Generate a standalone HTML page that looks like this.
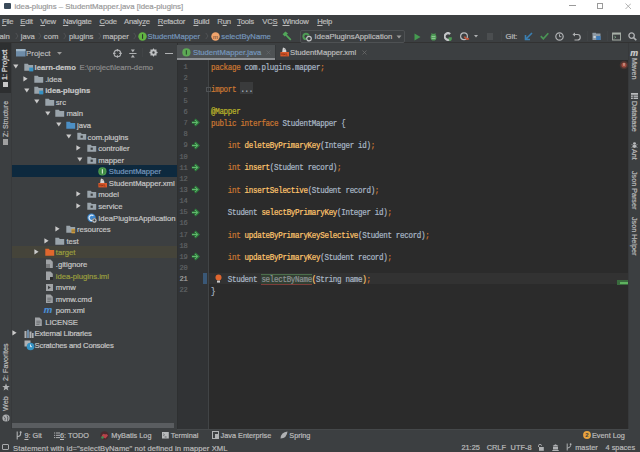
<!DOCTYPE html><html><head><meta charset="utf-8"><style>html,body{margin:0;padding:0}body{width:640px;height:452px;overflow:hidden;position:relative;background:#3C3F41}div,svg{position:absolute}div{-webkit-text-stroke-width:0.2px}</style></head><body>
<div style="position:absolute;left:0px;top:0px;width:640px;height:15px;background:#FFFFFF;"></div>
<div style="position:absolute;left:14.5px;top:1.92px;font:normal 7.8px/9.36px 'Liberation Sans', sans-serif;color:#9A9A9A;white-space:pre;letter-spacing:0px;">idea-plugins – StudentMapper.java [idea-plugins]</div>
<div style="position:absolute;left:4px;top:3px;width:7px;height:6px;background:#3A4A5A;border-radius:1px"></div>
<div style="position:absolute;left:569px;top:5.2px;width:7px;height:0.8px;background:#9A9A9A;"></div>
<div style="position:absolute;left:597px;top:3px;width:6px;height:6px;background:transparent;border:0.8px solid #9A9A9A;box-sizing:border-box"></div>
<svg style="left:624.5px;top:3px" width="6.5" height="6.5"><path d="M0.5 0.5L6 6M6 0.5L0.5 6" stroke="#9A9A9A" stroke-width="0.75"/></svg>
<div style="position:absolute;left:0px;top:15px;width:640px;height:14px;background:#3C3F41;"></div>
<div style="position:absolute;left:1.9px;top:17.01px;font:normal 7.7px/9.24px 'Liberation Sans', sans-serif;color:#BBBBBB;white-space:pre;letter-spacing:-0.22px;"><u style="text-decoration-thickness:0.7px;text-underline-offset:1px">F</u>ile</div>
<div style="position:absolute;left:20.3px;top:17.01px;font:normal 7.7px/9.24px 'Liberation Sans', sans-serif;color:#BBBBBB;white-space:pre;letter-spacing:-0.22px;"><u style="text-decoration-thickness:0.7px;text-underline-offset:1px">E</u>dit</div>
<div style="position:absolute;left:40.3px;top:17.01px;font:normal 7.7px/9.24px 'Liberation Sans', sans-serif;color:#BBBBBB;white-space:pre;letter-spacing:-0.22px;"><u style="text-decoration-thickness:0.7px;text-underline-offset:1px">V</u>iew</div>
<div style="position:absolute;left:62.9px;top:17.01px;font:normal 7.7px/9.24px 'Liberation Sans', sans-serif;color:#BBBBBB;white-space:pre;letter-spacing:-0.22px;"><u style="text-decoration-thickness:0.7px;text-underline-offset:1px">N</u>avigate</div>
<div style="position:absolute;left:99.4px;top:17.01px;font:normal 7.7px/9.24px 'Liberation Sans', sans-serif;color:#BBBBBB;white-space:pre;letter-spacing:-0.22px;"><u style="text-decoration-thickness:0.7px;text-underline-offset:1px">C</u>ode</div>
<div style="position:absolute;left:124px;top:17.01px;font:normal 7.7px/9.24px 'Liberation Sans', sans-serif;color:#BBBBBB;white-space:pre;letter-spacing:-0.22px;">Analy<u style="text-decoration-thickness:0.7px;text-underline-offset:1px">z</u>e</div>
<div style="position:absolute;left:157.8px;top:17.01px;font:normal 7.7px/9.24px 'Liberation Sans', sans-serif;color:#BBBBBB;white-space:pre;letter-spacing:-0.22px;"><u style="text-decoration-thickness:0.7px;text-underline-offset:1px">R</u>efactor</div>
<div style="position:absolute;left:193.4px;top:17.01px;font:normal 7.7px/9.24px 'Liberation Sans', sans-serif;color:#BBBBBB;white-space:pre;letter-spacing:-0.22px;"><u style="text-decoration-thickness:0.7px;text-underline-offset:1px">B</u>uild</div>
<div style="position:absolute;left:217.3px;top:17.01px;font:normal 7.7px/9.24px 'Liberation Sans', sans-serif;color:#BBBBBB;white-space:pre;letter-spacing:-0.22px;">R<u style="text-decoration-thickness:0.7px;text-underline-offset:1px">u</u>n</div>
<div style="position:absolute;left:237.1px;top:17.01px;font:normal 7.7px/9.24px 'Liberation Sans', sans-serif;color:#BBBBBB;white-space:pre;letter-spacing:-0.22px;"><u style="text-decoration-thickness:0.7px;text-underline-offset:1px">T</u>ools</div>
<div style="position:absolute;left:262.3px;top:17.01px;font:normal 7.7px/9.24px 'Liberation Sans', sans-serif;color:#BBBBBB;white-space:pre;letter-spacing:-0.22px;">VC<u style="text-decoration-thickness:0.7px;text-underline-offset:1px">S</u></div>
<div style="position:absolute;left:282.5px;top:17.01px;font:normal 7.7px/9.24px 'Liberation Sans', sans-serif;color:#BBBBBB;white-space:pre;letter-spacing:-0.22px;"><u style="text-decoration-thickness:0.7px;text-underline-offset:1px">W</u>indow</div>
<div style="position:absolute;left:317.2px;top:17.01px;font:normal 7.7px/9.24px 'Liberation Sans', sans-serif;color:#BBBBBB;white-space:pre;letter-spacing:-0.22px;"><u style="text-decoration-thickness:0.7px;text-underline-offset:1px">H</u>elp</div>
<div style="position:absolute;left:0px;top:29px;width:640px;height:14px;background:#3C3F41;"></div>
<div style="position:absolute;left:0px;top:42px;width:640px;height:1px;background:#323232;"></div>
<div style="position:absolute;left:-0.5px;top:31.91px;font:normal 7.7px/9.24px 'Liberation Sans', sans-serif;color:#BBBBBB;white-space:pre;letter-spacing:0px;">ain</div>
<div style="position:absolute;left:20.8px;top:31.91px;font:normal 7.7px/9.24px 'Liberation Sans', sans-serif;color:#BBBBBB;white-space:pre;letter-spacing:0px;">java</div>
<div style="position:absolute;left:43.8px;top:31.91px;font:normal 7.7px/9.24px 'Liberation Sans', sans-serif;color:#BBBBBB;white-space:pre;letter-spacing:0px;">com</div>
<div style="position:absolute;left:68.9px;top:31.91px;font:normal 7.7px/9.24px 'Liberation Sans', sans-serif;color:#BBBBBB;white-space:pre;letter-spacing:0px;">plugins</div>
<div style="position:absolute;left:102.8px;top:31.91px;font:normal 7.7px/9.24px 'Liberation Sans', sans-serif;color:#BBBBBB;white-space:pre;letter-spacing:0px;">mapper</div>
<svg style="left:15.399999999999999px;top:32px" width="4" height="8"><path d="M0.8 1L3 4L0.8 7" stroke="#5A5C5E" stroke-width="0.7" fill="none"/></svg>
<svg style="left:38.4px;top:32px" width="4" height="8"><path d="M0.8 1L3 4L0.8 7" stroke="#5A5C5E" stroke-width="0.7" fill="none"/></svg>
<svg style="left:62.5px;top:32px" width="4" height="8"><path d="M0.8 1L3 4L0.8 7" stroke="#5A5C5E" stroke-width="0.7" fill="none"/></svg>
<svg style="left:97.5px;top:32px" width="4" height="8"><path d="M0.8 1L3 4L0.8 7" stroke="#5A5C5E" stroke-width="0.7" fill="none"/></svg>
<svg style="left:132.5px;top:32px" width="4" height="8"><path d="M0.8 1L3 4L0.8 7" stroke="#5A5C5E" stroke-width="0.7" fill="none"/></svg>
<svg style="left:205px;top:32px" width="4" height="8"><path d="M0.8 1L3 4L0.8 7" stroke="#5A5C5E" stroke-width="0.7" fill="none"/></svg>
<svg style="left:137.5px;top:31.5px" width="9" height="9"><circle cx="4.5" cy="4.5" r="4.2" fill="#62B543"/><rect x="4" y="2.2" width="1.1" height="4.6" fill="#2B3A2B"/></svg>
<div style="position:absolute;left:147.5px;top:31.91px;font:normal 7.7px/9.24px 'Liberation Sans', sans-serif;color:#7596BC;white-space:pre;letter-spacing:0px;">StudentMapper</div>
<svg style="left:211px;top:31.5px" width="9" height="9"><circle cx="4.5" cy="4.5" r="4.2" fill="#F0A46C"/><text x="4.5" y="6.6" font-size="6" text-anchor="middle" fill="#5A3A2A" font-family="Liberation Sans">m</text></svg>
<div style="position:absolute;left:221.3px;top:31.91px;font:normal 7.7px/9.24px 'Liberation Sans', sans-serif;color:#7596BC;white-space:pre;letter-spacing:0px;">selectByName</div>
<svg style="left:282px;top:31px" width="10" height="10"><path d="M3.6 3.6L8.8 8.8" stroke="#52A85A" stroke-width="1.7"/><path d="M0.6 3.2L3.4 0.4L6 2.6L2.8 5.6Z" fill="#52A85A"/></svg>
<div style="position:absolute;left:300px;top:29.5px;width:105px;height:13.5px;background:#3C3F41;border:1px solid #4E5153;box-sizing:border-box;border-radius:2px"></div>
<svg style="left:302px;top:31.5px" width="11" height="10"><circle cx="4" cy="4.4" r="3.6" fill="#4E9A55"/><circle cx="4" cy="4.4" r="1.6" fill="#3C3F41"/><circle cx="7" cy="6.6" r="3" fill="#3C3F41"/><circle cx="7" cy="6.6" r="2.3" fill="none" stroke="#C4C6C8" stroke-width="1.2"/></svg>
<div style="position:absolute;left:314.5px;top:32.11px;font:normal 7.7px/9.24px 'Liberation Sans', sans-serif;color:#BBBBBB;white-space:pre;letter-spacing:0px;">IdeaPluginsApplication</div>
<svg style="left:396px;top:34.5px" width="6" height="4"><path d="M0.5 0.5L5.5 0.5L3 3.5Z" fill="#9A9A9A"/></svg>
<svg style="left:414px;top:32.5px" width="7" height="8"><path d="M0.5 0.5L6.5 4L0.5 7.5Z" fill="#459A50"/></svg>
<svg style="left:429.8px;top:32px" width="7" height="9"><path d="M1.6 1.2L2.6 2.3M5.4 1.2L4.4 2.3" stroke="#4E9A55" stroke-width="0.9"/><ellipse cx="3.5" cy="5.2" rx="2.9" ry="3.4" fill="#4E9A55"/><path d="M1.6 4.6H5.4M1.6 6.4H5.4" stroke="#A6D4AA" stroke-width="0.8"/></svg>
<svg style="left:444px;top:32px" width="8" height="9"><path d="M6.2 2A3.3 3.3 0 1 0 6.2 7" fill="none" stroke="#C4C6C8" stroke-width="2.1"/><path d="M4.6 5.2H7.8V7Q7.8 8.6 6.2 9Q4.6 8.6 4.6 7Z" fill="#4E9A55"/></svg>
<svg style="left:460px;top:32px" width="10" height="9"><circle cx="4" cy="4.2" r="3.4" fill="none" stroke="#B8BABC" stroke-width="1.2"/><path d="M4.5 4.5Q6 8 9 6.5" stroke="#C2553A" stroke-width="1.9" fill="none"/></svg>
<svg style="left:474px;top:35px" width="4" height="3"><path d="M0 0L4 0L2 2.5Z" fill="#AFB1B3"/></svg>
<div style="position:absolute;left:486.5px;top:33px;width:6.5px;height:6.5px;background:#4B4E50;"></div>
<div style="position:absolute;left:501px;top:31px;width:1px;height:10px;background:#414446;"></div>
<div style="position:absolute;left:505.5px;top:31.91px;font:normal 7.7px/9.24px 'Liberation Sans', sans-serif;color:#BBBBBB;white-space:pre;letter-spacing:0px;">Git:</div>
<svg style="left:524px;top:32px" width="9" height="9"><path d="M8 1L2 7M1.5 3V7.5H6" stroke="#3A7FB2" stroke-width="1.6" fill="none"/></svg>
<svg style="left:540px;top:32px" width="9" height="8"><path d="M0.8 4.2L3.3 6.8L8.3 1.2" stroke="#4A9455" stroke-width="1.7" fill="none"/></svg>
<svg style="left:554.5px;top:31.5px" width="9" height="9"><circle cx="4.5" cy="4.5" r="3.7" fill="none" stroke="#AFB1B3" stroke-width="1.2"/><path d="M4.5 2.3V4.7H6.3" stroke="#AFB1B3" stroke-width="1" fill="none"/></svg>
<svg style="left:572px;top:32px" width="9" height="9"><path d="M2 2.5H5.5A2.7 2.7 0 0 1 5.5 8H2.5" stroke="#AFB1B3" stroke-width="1.2" fill="none"/><path d="M0.5 2.5L3 0.5V4.5Z" fill="#AFB1B3"/></svg>
<div style="position:absolute;left:586.5px;top:31px;width:1px;height:10px;background:#414446;"></div>
<svg style="left:592px;top:32px" width="9" height="9"><rect x="0.5" y="1.5" width="8" height="6.5" fill="#8E9AA4"/><rect x="0.5" y="0.8" width="3.5" height="1.5" fill="#8E9AA4"/><rect x="4.2" y="4" width="4.3" height="4" fill="#3C7AB8"/><rect x="1.5" y="4" width="2.2" height="2" fill="#C8D2DA"/></svg>
<div style="position:absolute;left:607px;top:31px;width:1px;height:10px;background:#414446;"></div>
<svg style="left:612px;top:32px" width="9" height="9"><rect x="0.6" y="1" width="8" height="7" fill="none" stroke="#A7B0A8" stroke-width="1"/><rect x="0.6" y="1" width="8" height="1.6" fill="#A7B0A8"/><path d="M2.5 4.3L3.8 5.2L2.5 6.1" stroke="#8FC397" stroke-width="0.8" fill="none"/></svg>
<svg style="left:628px;top:32px" width="9" height="9"><circle cx="3.6" cy="3.6" r="2.7" fill="none" stroke="#AFB1B3" stroke-width="1.3"/><path d="M5.6 5.6L8.3 8.3" stroke="#AFB1B3" stroke-width="1.6"/></svg>
<div style="position:absolute;left:0px;top:43px;width:11px;height:386px;background:#3C3F41;"></div>
<div style="position:absolute;left:11px;top:43px;width:1px;height:386px;background:#37393B;"></div>
<div style="position:absolute;left:0px;top:43px;width:11px;height:50px;background:#2D2F30;"></div>
<div style="position:absolute;left:1.2px;top:79.6px;transform-origin:0 0;transform:rotate(-90deg);font:normal 7.2px/8.64px 'Liberation Sans', sans-serif;color:#E2E2E2;white-space:pre">1: Project</div>
<div style="position:absolute;left:2.5px;top:81.5px;width:5.5px;height:5.5px;background:#C8C8C8;"></div>
<div style="position:absolute;left:1.5px;top:136.8px;transform-origin:0 0;transform:rotate(-90deg);font:normal 6.9px/8.28px 'Liberation Sans', sans-serif;color:#BBBBBB;white-space:pre">Z: Structure</div>
<div style="position:absolute;left:3px;top:139px;width:4.5px;height:5.5px;background:#A0A0A0;"></div>
<div style="position:absolute;left:1.5px;top:381px;transform-origin:0 0;transform:rotate(-90deg);font:normal 7.2px/8.64px 'Liberation Sans', sans-serif;color:#BBBBBB;white-space:pre">2: Favorites</div>
<svg style="left:1.5px;top:383px" width="8" height="8"><path d="M4 0.3L5 3H7.8L5.6 4.7L6.4 7.6L4 5.9L1.6 7.6L2.4 4.7L0.2 3H3Z" fill="#AFB1B3"/></svg>
<div style="position:absolute;left:1.5px;top:411px;transform-origin:0 0;transform:rotate(-90deg);font:normal 7.2px/8.64px 'Liberation Sans', sans-serif;color:#BBBBBB;white-space:pre">Web</div>
<svg style="left:1.5px;top:413.5px" width="8" height="8"><circle cx="4" cy="4" r="3.6" fill="#AFB1B3"/><path d="M2 2.5Q4 4 3 6.5M5 1.5Q6.5 3.5 5.5 6.8" stroke="#3C3F41" stroke-width="0.8" fill="none"/></svg>
<div style="position:absolute;left:12px;top:43px;width:165px;height:386px;background:#3C3F41;"></div>
<div style="position:absolute;left:177px;top:43px;width:1px;height:386px;background:#2E3031;"></div>
<svg style="left:15.5px;top:49px" width="10" height="8"><rect x="0" y="0" width="9.5" height="7.5" fill="#6E8CA8"/><rect x="0" y="0" width="9.5" height="2.2" fill="#9FB6C8"/></svg>
<div style="position:absolute;left:26px;top:48.72px;font:normal 7.9px/9.48px 'Liberation Sans', sans-serif;color:#BBBBBB;white-space:pre;letter-spacing:0px;">Project</div>
<svg style="left:57px;top:52px" width="5" height="3"><path d="M0 0L5 0L2.5 2.8Z" fill="#9A9A9A"/></svg>
<svg style="left:112.5px;top:48.8px" width="9" height="9"><circle cx="4.4" cy="4.4" r="3.3" fill="none" stroke="#AFB1B3" stroke-width="1.1"/><path d="M4.4 0V2.6M4.4 6.2V8.8M0 4.4H2.6M6.2 4.4H8.8" stroke="#AFB1B3" stroke-width="1.1"/></svg>
<svg style="left:128.8px;top:48.8px" width="8" height="9"><path d="M0.3 4.5H7.5" stroke="#AFB1B3" stroke-width="1"/><path d="M1.8 0.6H5.9L3.85 3.2ZM1.8 8.4H5.9L3.85 5.8Z" fill="#AFB1B3"/></svg>
<div style="position:absolute;left:142px;top:48px;width:1px;height:9px;background:#414446;"></div>
<svg style="left:148.5px;top:48px" width="9" height="9"><path d="M8.58 4.10 L8.58 4.90 L7.56 5.43 L7.32 6.01 L7.67 7.10 L7.10 7.67 L6.01 7.32 L5.43 7.56 L4.90 8.58 L4.10 8.58 L3.57 7.56 L2.99 7.32 L1.90 7.67 L1.33 7.10 L1.68 6.01 L1.44 5.43 L0.42 4.90 L0.42 4.10 L1.44 3.57 L1.68 2.99 L1.33 1.90 L1.90 1.33 L2.99 1.68 L3.57 1.44 L4.10 0.42 L4.90 0.42 L5.43 1.44 L6.01 1.68 L7.10 1.33 L7.67 1.90 L7.32 2.99 L7.56 3.57Z M4.5 3.3A1.2 1.2 0 1 0 4.5 5.7A1.2 1.2 0 1 0 4.5 3.3Z" fill="#BDBFC1" fill-rule="evenodd"/></svg>
<div style="position:absolute;left:164.5px;top:52.5px;width:8.5px;height:1.1px;background:#AFB1B3;"></div>
<svg style="left:13.20px;top:64.40px" width="6" height="5"><path d="M0.2 0.4H5.4L2.8 4.6Z" fill="#CACACA"/></svg>
<svg style="left:23.60px;top:63.00px" width="10" height="9"><path d="M0.3 0.8H3.8L4.8 1.9H9.2V7.8H0.3Z" fill="#9AA4AB"/><rect x="5.2" y="4.6" width="4" height="3.8" fill="#3592C4"/></svg>
<div style="position:absolute;left:34.6px;top:63.11px;font:bold 7.7px/9.24px 'Liberation Sans', sans-serif;color:#C6C6C6;white-space:pre;letter-spacing:-0.02px;">learn-demo</div>
<div style="position:absolute;left:79.6px;top:63.11px;font:normal 7.7px/9.24px 'Liberation Sans', sans-serif;color:#8C8C8C;white-space:pre;letter-spacing:0px;">E:\project\learn-demo</div>
<svg style="left:23.00px;top:75.58px" width="5" height="6"><path d="M0.4 0.2V5.4L4.6 2.8Z" fill="#CACACA"/></svg>
<svg style="left:34.20px;top:74.58px" width="10" height="9"><path d="M0.3 0.8H3.8L4.8 1.9H9.2V7.8H0.3Z" fill="#9AA4AB"/></svg>
<div style="position:absolute;left:45.199999999999996px;top:74.69px;font:normal 7.7px/9.24px 'Liberation Sans', sans-serif;color:#C6C6C6;white-space:pre;letter-spacing:-0.02px;">.idea</div>
<svg style="left:23.80px;top:87.56px" width="6" height="5"><path d="M0.2 0.4H5.4L2.8 4.6Z" fill="#CACACA"/></svg>
<svg style="left:34.20px;top:86.16px" width="10" height="9"><path d="M0.3 0.8H3.8L4.8 1.9H9.2V7.8H0.3Z" fill="#9AA4AB"/><rect x="5.2" y="4.6" width="4" height="3.8" fill="#3592C4"/></svg>
<div style="position:absolute;left:45.199999999999996px;top:86.27px;font:bold 7.7px/9.24px 'Liberation Sans', sans-serif;color:#C6C6C6;white-space:pre;letter-spacing:-0.02px;">idea-plugins</div>
<svg style="left:34.40px;top:99.14px" width="6" height="5"><path d="M0.2 0.4H5.4L2.8 4.6Z" fill="#CACACA"/></svg>
<svg style="left:44.80px;top:97.74px" width="10" height="9"><path d="M0.3 0.8H3.8L4.8 1.9H9.2V7.8H0.3Z" fill="#9AA4AB"/></svg>
<div style="position:absolute;left:55.8px;top:97.85px;font:normal 7.7px/9.24px 'Liberation Sans', sans-serif;color:#C6C6C6;white-space:pre;letter-spacing:-0.02px;">src</div>
<svg style="left:45.00px;top:110.72px" width="6" height="5"><path d="M0.2 0.4H5.4L2.8 4.6Z" fill="#CACACA"/></svg>
<svg style="left:55.40px;top:109.32px" width="10" height="9"><path d="M0.3 0.8H3.8L4.8 1.9H9.2V7.8H0.3Z" fill="#9AA4AB"/></svg>
<div style="position:absolute;left:66.4px;top:109.43px;font:normal 7.7px/9.24px 'Liberation Sans', sans-serif;color:#C6C6C6;white-space:pre;letter-spacing:-0.02px;">main</div>
<svg style="left:55.60px;top:122.30px" width="6" height="5"><path d="M0.2 0.4H5.4L2.8 4.6Z" fill="#CACACA"/></svg>
<svg style="left:66.00px;top:120.90px" width="10" height="9"><path d="M0.3 0.8H3.8L4.8 1.9H9.2V7.8H0.3Z" fill="#4C8FC4"/></svg>
<div style="position:absolute;left:77.0px;top:121.01px;font:normal 7.7px/9.24px 'Liberation Sans', sans-serif;color:#C6C6C6;white-space:pre;letter-spacing:-0.02px;">java</div>
<svg style="left:66.20px;top:133.88px" width="6" height="5"><path d="M0.2 0.4H5.4L2.8 4.6Z" fill="#CACACA"/></svg>
<svg style="left:76.60px;top:132.48px" width="10" height="9"><path d="M0.3 0.8H3.8L4.8 1.9H9.2V7.8H0.3Z" fill="#9AA4AB"/><rect x="3.6" y="3.6" width="2.2" height="2.2" fill="#3C3F41"/></svg>
<div style="position:absolute;left:87.60000000000001px;top:132.59px;font:normal 7.7px/9.24px 'Liberation Sans', sans-serif;color:#C6C6C6;white-space:pre;letter-spacing:-0.02px;">com.plugins</div>
<svg style="left:76.00px;top:145.06px" width="5" height="6"><path d="M0.4 0.2V5.4L4.6 2.8Z" fill="#CACACA"/></svg>
<svg style="left:87.20px;top:144.06px" width="10" height="9"><path d="M0.3 0.8H3.8L4.8 1.9H9.2V7.8H0.3Z" fill="#9AA4AB"/><rect x="3.6" y="3.6" width="2.2" height="2.2" fill="#3C3F41"/></svg>
<div style="position:absolute;left:98.2px;top:144.17px;font:normal 7.7px/9.24px 'Liberation Sans', sans-serif;color:#C6C6C6;white-space:pre;letter-spacing:-0.02px;">controller</div>
<svg style="left:76.80px;top:157.04px" width="6" height="5"><path d="M0.2 0.4H5.4L2.8 4.6Z" fill="#CACACA"/></svg>
<svg style="left:87.20px;top:155.64px" width="10" height="9"><path d="M0.3 0.8H3.8L4.8 1.9H9.2V7.8H0.3Z" fill="#9AA4AB"/><rect x="3.6" y="3.6" width="2.2" height="2.2" fill="#3C3F41"/></svg>
<div style="position:absolute;left:98.2px;top:155.75px;font:normal 7.7px/9.24px 'Liberation Sans', sans-serif;color:#C6C6C6;white-space:pre;letter-spacing:-0.02px;">mapper</div>
<div style="position:absolute;left:12px;top:165.42px;width:165px;height:11.6px;background:#0D293E;"></div>
<svg style="left:97.80px;top:166.92px" width="9" height="9"><circle cx="4.4" cy="4.4" r="4.1" fill="#4FA04F"/><circle cx="4.4" cy="4.4" r="3.1" fill="#3E8A45"/><rect x="3.8" y="2.2" width="1.2" height="4.4" fill="#CDE8CD"/></svg>
<div style="position:absolute;left:108.80000000000001px;top:167.33px;font:normal 7.7px/9.24px 'Liberation Sans', sans-serif;color:#7596BC;white-space:pre;letter-spacing:-0.02px;">StudentMapper</div>
<svg style="left:97.80px;top:178.30px" width="10" height="10"><path d="M3 0.6Q5.6 0.8 6.2 3.4L6.4 5H2.2L2.6 2.2Z" fill="#D4D4D4"/><path d="M4 1.8L5 2.6" stroke="#888" stroke-width="0.6"/><rect x="0.4" y="5" width="8.6" height="4.4" fill="#DB5A2C"/><path d="M1.5 6.2L2.5 8.2M2.5 6.2L1.5 8.2M3.6 6.2V8.2L4.3 7.2L5 8.2V6.2M6.2 6.2V8.2H7.6" stroke="#7A2A10" stroke-width="0.5" fill="none"/></svg>
<div style="position:absolute;left:108.80000000000001px;top:178.91px;font:normal 7.7px/9.24px 'Liberation Sans', sans-serif;color:#C6C6C6;white-space:pre;letter-spacing:-0.02px;">StudentMapper.xml</div>
<svg style="left:76.00px;top:191.38px" width="5" height="6"><path d="M0.4 0.2V5.4L4.6 2.8Z" fill="#CACACA"/></svg>
<svg style="left:87.20px;top:190.38px" width="10" height="9"><path d="M0.3 0.8H3.8L4.8 1.9H9.2V7.8H0.3Z" fill="#9AA4AB"/><rect x="3.6" y="3.6" width="2.2" height="2.2" fill="#3C3F41"/></svg>
<div style="position:absolute;left:98.2px;top:190.49px;font:normal 7.7px/9.24px 'Liberation Sans', sans-serif;color:#C6C6C6;white-space:pre;letter-spacing:-0.02px;">model</div>
<svg style="left:76.00px;top:202.96px" width="5" height="6"><path d="M0.4 0.2V5.4L4.6 2.8Z" fill="#CACACA"/></svg>
<svg style="left:87.20px;top:201.96px" width="10" height="9"><path d="M0.3 0.8H3.8L4.8 1.9H9.2V7.8H0.3Z" fill="#9AA4AB"/><rect x="3.6" y="3.6" width="2.2" height="2.2" fill="#3C3F41"/></svg>
<div style="position:absolute;left:98.2px;top:202.07px;font:normal 7.7px/9.24px 'Liberation Sans', sans-serif;color:#C6C6C6;white-space:pre;letter-spacing:-0.02px;">service</div>
<svg style="left:87.20px;top:213.04px" width="10" height="10"><circle cx="4.5" cy="4.8" r="4.2" fill="#3D88CF"/><path d="M6.4 2.8A2.6 2.6 0 1 0 6.4 6.8" fill="none" stroke="#DCE8F2" stroke-width="1.2"/><circle cx="7.4" cy="7.4" r="2.4" fill="#3C3F41"/><circle cx="7.4" cy="7.4" r="1.7" fill="none" stroke="#C8CACC" stroke-width="1.1"/></svg>
<div style="position:absolute;left:98.2px;top:213.65px;font:normal 7.7px/9.24px 'Liberation Sans', sans-serif;color:#C6C6C6;white-space:pre;letter-spacing:-0.02px;">IdeaPluginsApplication</div>
<svg style="left:54.80px;top:226.12px" width="5" height="6"><path d="M0.4 0.2V5.4L4.6 2.8Z" fill="#CACACA"/></svg>
<svg style="left:66.00px;top:225.12px" width="10" height="9"><path d="M0.3 0.8H3.8L4.8 1.9H9.2V7.8H0.3Z" fill="#9AA4AB"/><rect x="5.5" y="3.8" width="3.5" height="4.5" fill="#D9A343"/><path d="M5.5 5.2H9M5.5 6.7H9" stroke="#6B5A2A" stroke-width="0.6"/></svg>
<div style="position:absolute;left:77.0px;top:225.23px;font:normal 7.7px/9.24px 'Liberation Sans', sans-serif;color:#C6C6C6;white-space:pre;letter-spacing:-0.02px;">resources</div>
<svg style="left:44.20px;top:237.70px" width="5" height="6"><path d="M0.4 0.2V5.4L4.6 2.8Z" fill="#CACACA"/></svg>
<svg style="left:55.40px;top:236.70px" width="10" height="9"><path d="M0.3 0.8H3.8L4.8 1.9H9.2V7.8H0.3Z" fill="#9AA4AB"/></svg>
<div style="position:absolute;left:66.4px;top:236.81px;font:normal 7.7px/9.24px 'Liberation Sans', sans-serif;color:#C6C6C6;white-space:pre;letter-spacing:-0.02px;">test</div>
<div style="position:absolute;left:12px;top:246.48px;width:165px;height:11.6px;background:#45443A;"></div>
<svg style="left:33.60px;top:249.28px" width="5" height="6"><path d="M0.4 0.2V5.4L4.6 2.8Z" fill="#CACACA"/></svg>
<svg style="left:44.80px;top:248.28px" width="10" height="9"><path d="M0.3 0.8H3.8L4.8 1.9H9.2V7.8H0.3Z" fill="#E0672E"/></svg>
<div style="position:absolute;left:55.8px;top:248.39px;font:normal 7.7px/9.24px 'Liberation Sans', sans-serif;color:#9A9E3E;white-space:pre;letter-spacing:-0.02px;">target</div>
<svg style="left:44.80px;top:259.36px" width="9" height="10"><path d="M1 0.5H5.5L7.8 2.8V9H1Z" fill="#A0A3A6"/><rect x="1" y="5" width="4" height="4" fill="#7C7E80"/></svg>
<div style="position:absolute;left:55.8px;top:259.97px;font:normal 7.7px/9.24px 'Liberation Sans', sans-serif;color:#C6C6C6;white-space:pre;letter-spacing:-0.02px;">.gitignore</div>
<svg style="left:44.80px;top:270.94px" width="9" height="10"><path d="M1 0.5H5.5L7.8 2.8V9H1Z" fill="#A0A3A6"/><rect x="5" y="6" width="3" height="3" fill="#2B2B2B"/></svg>
<div style="position:absolute;left:55.8px;top:271.55px;font:normal 7.7px/9.24px 'Liberation Sans', sans-serif;color:#9A9E3E;white-space:pre;letter-spacing:-0.02px;">idea-plugins.iml</div>
<svg style="left:44.80px;top:283.02px" width="9" height="9"><rect x="1" y="1" width="7" height="7" fill="#A0A3A6"/><path d="M3 2.8L5.8 4.5L3 6.2Z" fill="#3C3F41"/></svg>
<div style="position:absolute;left:55.8px;top:283.13px;font:normal 7.7px/9.24px 'Liberation Sans', sans-serif;color:#C6C6C6;white-space:pre;letter-spacing:-0.02px;">mvnw</div>
<svg style="left:44.80px;top:294.10px" width="9" height="10"><path d="M1 0.5H5.5L7.8 2.8V9H1Z" fill="#A0A3A6"/><path d="M2.3 4.2H6.5M2.3 5.8H6.5M2.3 7.4H5.5" stroke="#5A5D60" stroke-width="0.7"/></svg>
<div style="position:absolute;left:55.8px;top:294.71px;font:normal 7.7px/9.24px 'Liberation Sans', sans-serif;color:#C6C6C6;white-space:pre;letter-spacing:-0.02px;">mvnw.cmd</div>
<div style="position:absolute;left:43.80px;top:304.18px;font:italic bold 9.5px/12px 'Liberation Sans', sans-serif;color:#4C8FD6">m</div>
<div style="position:absolute;left:55.8px;top:306.29px;font:normal 7.7px/9.24px 'Liberation Sans', sans-serif;color:#C6C6C6;white-space:pre;letter-spacing:-0.02px;">pom.xml</div>
<svg style="left:34.20px;top:317.26px" width="9" height="10"><path d="M1 0.5H5.5L7.8 2.8V9H1Z" fill="#A0A3A6"/><path d="M2.3 4.2H6.5M2.3 5.8H6.5M2.3 7.4H5.5" stroke="#5A5D60" stroke-width="0.7"/></svg>
<div style="position:absolute;left:45.199999999999996px;top:317.87px;font:normal 7.7px/9.24px 'Liberation Sans', sans-serif;color:#C6C6C6;white-space:pre;letter-spacing:-0.02px;">LICENSE</div>
<svg style="left:12.40px;top:330.34px" width="5" height="6"><path d="M0.4 0.2V5.4L4.6 2.8Z" fill="#CACACA"/></svg>
<svg style="left:23.60px;top:328.84px" width="10" height="10"><rect x="0.5" y="2" width="2" height="7" fill="#AFB1B3"/><rect x="3" y="0.8" width="2" height="8.2" fill="#6E8CA8"/><rect x="5.5" y="2.5" width="2" height="6.5" fill="#AFB1B3"/><rect x="8" y="4" width="1.6" height="5" fill="#AFB1B3"/></svg>
<div style="position:absolute;left:34.6px;top:329.45px;font:normal 7.7px/9.24px 'Liberation Sans', sans-serif;color:#C6C6C6;white-space:pre;letter-spacing:-0.15px;">External Libraries</div>
<svg style="left:23.60px;top:339.92px" width="11" height="11"><rect x="0.5" y="0.5" width="6" height="6" fill="#AFB1B3"/><circle cx="6.5" cy="6.5" r="3.8" fill="#3592C4"/><path d="M6.5 4.5V6.7H8" stroke="#fff" stroke-width="0.8" fill="none"/></svg>
<div style="position:absolute;left:34.6px;top:341.03px;font:normal 7.7px/9.24px 'Liberation Sans', sans-serif;color:#C6C6C6;white-space:pre;letter-spacing:-0.2px;">Scratches and Consoles</div>
<div style="position:absolute;left:12px;top:423px;width:162px;height:5px;background:#5A5D60;"></div>
<div style="position:absolute;left:178px;top:43px;width:451px;height:17px;background:#3C3F41;"></div>
<div style="position:absolute;left:177px;top:45px;width:98px;height:13.2px;background:#4E5254;"></div>
<div style="position:absolute;left:177px;top:58.2px;width:98px;height:1.8px;background:#8E9194;"></div>
<div style="position:absolute;left:275px;top:45px;width:0.8px;height:15px;background:#35383A;"></div>
<svg style="left:182px;top:47.5px" width="9" height="9"><circle cx="4.4" cy="4.4" r="4.1" fill="#5DAA55"/><rect x="3.8" y="2.2" width="1.1" height="4.4" fill="#2A4A2E"/></svg>
<div style="position:absolute;left:193px;top:48.21px;font:normal 7.7px/9.24px 'Liberation Sans', sans-serif;color:#7596BC;white-space:pre;letter-spacing:0px;">StudentMapper.java</div>
<svg style="left:266px;top:49.5px" width="5" height="5"><path d="M0.5 0.5L4.5 4.5M4.5 0.5L0.5 4.5" stroke="#666A6D" stroke-width="0.6"/></svg>
<svg style="left:279.5px;top:47px" width="10" height="10"><path d="M3 0.6Q5.6 0.8 6.2 3.4L6.4 5H2.2L2.6 2.2Z" fill="#D4D4D4"/><path d="M4 1.8L5 2.6" stroke="#888" stroke-width="0.6"/><rect x="0.4" y="5" width="8.6" height="4.4" fill="#DB5A2C"/><path d="M1.5 6.2L2.5 8.2M2.5 6.2L1.5 8.2M3.6 6.2V8.2L4.3 7.2L5 8.2V6.2M6.2 6.2V8.2H7.6" stroke="#7A2A10" stroke-width="0.5" fill="none"/></svg>
<div style="position:absolute;left:290px;top:48.21px;font:normal 7.7px/9.24px 'Liberation Sans', sans-serif;color:#BBBBBB;white-space:pre;letter-spacing:0px;">StudentMapper.xml</div>
<svg style="left:361.5px;top:49.5px" width="5" height="5"><path d="M0.5 0.5L4.5 4.5M4.5 0.5L0.5 4.5" stroke="#6E6E6E" stroke-width="0.7"/></svg>
<div style="position:absolute;left:178px;top:60px;width:451px;height:369px;background:#2B2B2B;"></div>
<div style="position:absolute;left:178px;top:60px;width:30.5px;height:369px;background:#313335;"></div>
<div style="position:absolute;left:208.3px;top:60px;width:0.9px;height:369px;background:#414446;"></div>
<div style="position:absolute;left:209.2px;top:272.54999999999995px;width:419px;height:11.3px;background:#323232;"></div>
<div style="position:absolute;left:178px;top:272.54999999999995px;width:30.3px;height:11.3px;background:#313335;"></div>
<div style="position:absolute;left:203px;top:272.95px;width:4px;height:10.8px;background:#3A5877;"></div>
<div style="position:absolute;left:169.9px;top:62.30px;width:17.5px;text-align:right;font:normal 7.0px/11.15px 'Liberation Mono', monospace;letter-spacing:-0.2px;color:#606366">1</div>
<div style="position:absolute;left:169.9px;top:73.45px;width:17.5px;text-align:right;font:normal 7.0px/11.15px 'Liberation Mono', monospace;letter-spacing:-0.2px;color:#606366">2</div>
<div style="position:absolute;left:169.9px;top:84.60px;width:17.5px;text-align:right;font:normal 7.0px/11.15px 'Liberation Mono', monospace;letter-spacing:-0.2px;color:#606366">3</div>
<div style="position:absolute;left:169.9px;top:95.75px;width:17.5px;text-align:right;font:normal 7.0px/11.15px 'Liberation Mono', monospace;letter-spacing:-0.2px;color:#606366">5</div>
<div style="position:absolute;left:169.9px;top:106.90px;width:17.5px;text-align:right;font:normal 7.0px/11.15px 'Liberation Mono', monospace;letter-spacing:-0.2px;color:#606366">6</div>
<div style="position:absolute;left:169.9px;top:118.05px;width:17.5px;text-align:right;font:normal 7.0px/11.15px 'Liberation Mono', monospace;letter-spacing:-0.2px;color:#606366">7</div>
<div style="position:absolute;left:169.9px;top:129.20px;width:17.5px;text-align:right;font:normal 7.0px/11.15px 'Liberation Mono', monospace;letter-spacing:-0.2px;color:#606366">8</div>
<div style="position:absolute;left:169.9px;top:140.35px;width:17.5px;text-align:right;font:normal 7.0px/11.15px 'Liberation Mono', monospace;letter-spacing:-0.2px;color:#606366">9</div>
<div style="position:absolute;left:169.9px;top:151.50px;width:17.5px;text-align:right;font:normal 7.0px/11.15px 'Liberation Mono', monospace;letter-spacing:-0.2px;color:#606366">10</div>
<div style="position:absolute;left:169.9px;top:162.65px;width:17.5px;text-align:right;font:normal 7.0px/11.15px 'Liberation Mono', monospace;letter-spacing:-0.2px;color:#606366">11</div>
<div style="position:absolute;left:169.9px;top:173.80px;width:17.5px;text-align:right;font:normal 7.0px/11.15px 'Liberation Mono', monospace;letter-spacing:-0.2px;color:#606366">12</div>
<div style="position:absolute;left:169.9px;top:184.95px;width:17.5px;text-align:right;font:normal 7.0px/11.15px 'Liberation Mono', monospace;letter-spacing:-0.2px;color:#606366">13</div>
<div style="position:absolute;left:169.9px;top:196.10px;width:17.5px;text-align:right;font:normal 7.0px/11.15px 'Liberation Mono', monospace;letter-spacing:-0.2px;color:#606366">14</div>
<div style="position:absolute;left:169.9px;top:207.25px;width:17.5px;text-align:right;font:normal 7.0px/11.15px 'Liberation Mono', monospace;letter-spacing:-0.2px;color:#606366">15</div>
<div style="position:absolute;left:169.9px;top:218.40px;width:17.5px;text-align:right;font:normal 7.0px/11.15px 'Liberation Mono', monospace;letter-spacing:-0.2px;color:#606366">16</div>
<div style="position:absolute;left:169.9px;top:229.55px;width:17.5px;text-align:right;font:normal 7.0px/11.15px 'Liberation Mono', monospace;letter-spacing:-0.2px;color:#606366">17</div>
<div style="position:absolute;left:169.9px;top:240.70px;width:17.5px;text-align:right;font:normal 7.0px/11.15px 'Liberation Mono', monospace;letter-spacing:-0.2px;color:#606366">18</div>
<div style="position:absolute;left:169.9px;top:251.85px;width:17.5px;text-align:right;font:normal 7.0px/11.15px 'Liberation Mono', monospace;letter-spacing:-0.2px;color:#606366">19</div>
<div style="position:absolute;left:169.9px;top:263.00px;width:17.5px;text-align:right;font:normal 7.0px/11.15px 'Liberation Mono', monospace;letter-spacing:-0.2px;color:#606366">20</div>
<div style="position:absolute;left:169.9px;top:274.15px;width:17.5px;text-align:right;font:normal 7.0px/11.15px 'Liberation Mono', monospace;letter-spacing:-0.2px;color:#A4A3A3">21</div>
<div style="position:absolute;left:169.9px;top:285.30px;width:17.5px;text-align:right;font:normal 7.0px/11.15px 'Liberation Mono', monospace;letter-spacing:-0.2px;color:#606366">22</div>
<svg style="left:191.3px;top:118.45px" width="9" height="9"><path d="M0.8 4.5H6.2M3.8 1.4L7.2 4.5L3.8 7.6" stroke="#2E7A3C" stroke-width="2.6" fill="none"/><path d="M1 4.5H6.4M4.2 2.2L6.8 4.5L4.2 6.8" stroke="#62B86E" stroke-width="1" fill="none"/></svg>
<svg style="left:191.3px;top:140.75px" width="9" height="9"><path d="M0.8 4.5H6.2M3.8 1.4L7.2 4.5L3.8 7.6" stroke="#2E7A3C" stroke-width="2.6" fill="none"/><path d="M1 4.5H6.4M4.2 2.2L6.8 4.5L4.2 6.8" stroke="#62B86E" stroke-width="1" fill="none"/></svg>
<svg style="left:191.3px;top:163.05px" width="9" height="9"><path d="M0.8 4.5H6.2M3.8 1.4L7.2 4.5L3.8 7.6" stroke="#2E7A3C" stroke-width="2.6" fill="none"/><path d="M1 4.5H6.4M4.2 2.2L6.8 4.5L4.2 6.8" stroke="#62B86E" stroke-width="1" fill="none"/></svg>
<svg style="left:191.3px;top:185.35px" width="9" height="9"><path d="M0.8 4.5H6.2M3.8 1.4L7.2 4.5L3.8 7.6" stroke="#2E7A3C" stroke-width="2.6" fill="none"/><path d="M1 4.5H6.4M4.2 2.2L6.8 4.5L4.2 6.8" stroke="#62B86E" stroke-width="1" fill="none"/></svg>
<svg style="left:191.3px;top:207.65px" width="9" height="9"><path d="M0.8 4.5H6.2M3.8 1.4L7.2 4.5L3.8 7.6" stroke="#2E7A3C" stroke-width="2.6" fill="none"/><path d="M1 4.5H6.4M4.2 2.2L6.8 4.5L4.2 6.8" stroke="#62B86E" stroke-width="1" fill="none"/></svg>
<svg style="left:191.3px;top:229.95px" width="9" height="9"><path d="M0.8 4.5H6.2M3.8 1.4L7.2 4.5L3.8 7.6" stroke="#2E7A3C" stroke-width="2.6" fill="none"/><path d="M1 4.5H6.4M4.2 2.2L6.8 4.5L4.2 6.8" stroke="#62B86E" stroke-width="1" fill="none"/></svg>
<svg style="left:191.3px;top:252.25px" width="9" height="9"><path d="M0.8 4.5H6.2M3.8 1.4L7.2 4.5L3.8 7.6" stroke="#2E7A3C" stroke-width="2.6" fill="none"/><path d="M1 4.5H6.4M4.2 2.2L6.8 4.5L4.2 6.8" stroke="#62B86E" stroke-width="1" fill="none"/></svg>
<div style="position:absolute;left:211.0px;top:62.70px;font:normal 7.5px/11.15px 'Liberation Mono', monospace;letter-spacing:-0.3px;white-space:pre;transform:scaleY(1.14);transform-origin:0 7.6px"><span style="color:#CC7832">package</span><span style="color:#A9B7C6"> com.plugins.mapper</span><span style="color:#CC7832">;</span></div>
<div style="position:absolute;left:211.0px;top:85.08px;font:normal 7.5px/11.15px 'Liberation Mono', monospace;letter-spacing:-0.3px;white-space:pre;transform:scaleY(1.14);transform-origin:0 7.6px"><span style="color:#CC7832">import </span></div>
<div style="position:absolute;left:239.9px;top:82.39999999999999px;width:13px;height:11.2px;background:#3A3B3C;"></div>
<div style="position:absolute;left:211.0px;top:85.08px;font:normal 7.5px/11.15px 'Liberation Mono', monospace;letter-spacing:-0.3px;white-space:pre;transform:scaleY(1.14);transform-origin:0 7.6px"><span style="color:#A9B7C6">       ...</span></div>
<div style="position:absolute;left:211.0px;top:107.46px;font:normal 7.5px/11.15px 'Liberation Mono', monospace;letter-spacing:-0.3px;white-space:pre;transform:scaleY(1.14);transform-origin:0 7.6px"><span style="color:#BBB529">@Mapper</span></div>
<div style="position:absolute;left:205.5px;top:87.39999999999999px;width:5px;height:4.4px;background:transparent;border:0.8px solid #505356;box-sizing:border-box"></div>
<div style="position:absolute;left:211.0px;top:118.65px;font:normal 7.5px/11.15px 'Liberation Mono', monospace;letter-spacing:-0.3px;white-space:pre;transform:scaleY(1.14);transform-origin:0 7.6px"><span style="color:#CC7832">public interface </span><span style="color:#A9B7C6">StudentMapper {</span></div>
<div style="position:absolute;left:211.0px;top:141.03px;font:normal 7.5px/11.15px 'Liberation Mono', monospace;letter-spacing:-0.3px;white-space:pre;transform:scaleY(1.14);transform-origin:0 7.6px"><span style="color:#CC7832">    int </span><span style="color:#FFC66D">deleteByPrimaryKey</span><span style="color:#A9B7C6">(Integer id)</span><span style="color:#CC7832">;</span></div>
<div style="position:absolute;left:211.0px;top:163.41px;font:normal 7.5px/11.15px 'Liberation Mono', monospace;letter-spacing:-0.3px;white-space:pre;transform:scaleY(1.14);transform-origin:0 7.6px"><span style="color:#CC7832">    int </span><span style="color:#FFC66D">insert</span><span style="color:#A9B7C6">(Student record)</span><span style="color:#CC7832">;</span></div>
<div style="position:absolute;left:211.0px;top:185.79px;font:normal 7.5px/11.15px 'Liberation Mono', monospace;letter-spacing:-0.3px;white-space:pre;transform:scaleY(1.14);transform-origin:0 7.6px"><span style="color:#CC7832">    int </span><span style="color:#FFC66D">insertSelective</span><span style="color:#A9B7C6">(Student record)</span><span style="color:#CC7832">;</span></div>
<div style="position:absolute;left:211.0px;top:208.17px;font:normal 7.5px/11.15px 'Liberation Mono', monospace;letter-spacing:-0.3px;white-space:pre;transform:scaleY(1.14);transform-origin:0 7.6px"><span style="color:#A9B7C6">    Student </span><span style="color:#FFC66D">selectByPrimaryKey</span><span style="color:#A9B7C6">(Integer id)</span><span style="color:#CC7832">;</span></div>
<div style="position:absolute;left:211.0px;top:230.55px;font:normal 7.5px/11.15px 'Liberation Mono', monospace;letter-spacing:-0.3px;white-space:pre;transform:scaleY(1.14);transform-origin:0 7.6px"><span style="color:#CC7832">    int </span><span style="color:#FFC66D">updateByPrimaryKeySelective</span><span style="color:#A9B7C6">(Student record)</span><span style="color:#CC7832">;</span></div>
<div style="position:absolute;left:211.0px;top:252.93px;font:normal 7.5px/11.15px 'Liberation Mono', monospace;letter-spacing:-0.3px;white-space:pre;transform:scaleY(1.14);transform-origin:0 7.6px"><span style="color:#CC7832">    int </span><span style="color:#FFC66D">updateByPrimaryKey</span><span style="color:#A9B7C6">(Student record)</span><span style="color:#CC7832">;</span></div>
<div style="position:absolute;left:260.79999999999995px;top:273.75px;width:51.400000000000006px;height:11.2px;background:#334033;"></div>
<div style="position:absolute;left:260.79999999999995px;top:273.75px;width:51.400000000000006px;height:1.1px;background:#4C6E4C;"></div>
<div style="position:absolute;left:260.79999999999995px;top:283.75px;width:51.400000000000006px;height:1px;background:#7E3D3A;"></div>
<div style="position:absolute;left:211.0px;top:275.31px;font:normal 7.5px/11.15px 'Liberation Mono', monospace;letter-spacing:-0.3px;white-space:pre;transform:scaleY(1.14);transform-origin:0 7.6px"><span style="color:#A9B7C6">    Student </span><span style="color:#8E9296">selectByName</span><span style="color:#FFC66D">(</span><span style="color:#A9B7C6">String name</span><span style="color:#FFC66D">)</span><span style="color:#CC7832">;</span></div>
<svg style="left:215px;top:274.35px" width="7" height="10"><circle cx="3.5" cy="3.5" r="3" fill="#E0662F"/><rect x="2" y="6.6" width="3" height="2" fill="#CCCCCC"/></svg>
<div style="position:absolute;left:211.0px;top:286.50px;font:normal 7.5px/11.15px 'Liberation Mono', monospace;letter-spacing:-0.3px;white-space:pre;transform:scaleY(1.14);transform-origin:0 7.6px"><span style="color:#A9B7C6">}</span></div>
<svg style="left:618.5px;top:59.5px" width="10" height="10"><circle cx="5" cy="5" r="4.3" fill="#4A3430"/><circle cx="5" cy="5" r="2.6" fill="#9E4A3E"/><rect x="4.4" y="3" width="1.2" height="2.8" fill="#D9B0A0"/></svg>
<div style="position:absolute;left:617px;top:280px;width:13px;height:5px;background:#3A6B3E;"></div>
<div style="position:absolute;left:620px;top:281.5px;width:9px;height:2px;background:#5FB25F;"></div>
<div style="position:absolute;left:629px;top:43px;width:11px;height:386px;background:#3C3F41;"></div>
<div style="position:absolute;left:628px;top:43px;width:1px;height:386px;background:#37393B;"></div>
<div style="position:absolute;left:630.3px;top:47.6px;font:italic bold 8.8px/10px 'Liberation Sans', sans-serif;color:#D0D0D0">m</div>
<div style="position:absolute;left:638.1px;top:58px;transform-origin:0 0;transform:rotate(90deg);font:normal 7.2px/8.64px 'Liberation Sans', sans-serif;color:#BBBBBB;white-space:pre">Maven</div>
<svg style="left:631px;top:92.8px" width="7" height="6.5"><rect x="0" y="0" width="7" height="6.5" fill="#B8BABC"/><path d="M0 2.2H7M0 4.3H7M2.3 2.2V6.5" stroke="#3C3F41" stroke-width="0.7"/></svg>
<div style="position:absolute;left:638.1px;top:101px;transform-origin:0 0;transform:rotate(90deg);font:normal 7.2px/8.64px 'Liberation Sans', sans-serif;color:#BBBBBB;white-space:pre">Database</div>
<svg style="left:631px;top:142.2px" width="7" height="6"><ellipse cx="3.5" cy="1.5" rx="1.5" ry="1.3" fill="#B8BABC"/><ellipse cx="3.5" cy="4.3" rx="1.8" ry="1.6" fill="#B8BABC"/><path d="M0.5 2.5L6.5 5.5M6.5 2.5L0.5 5.5" stroke="#B8BABC" stroke-width="0.6"/></svg>
<div style="position:absolute;left:638.1px;top:148.7px;transform-origin:0 0;transform:rotate(90deg);font:normal 7.2px/8.64px 'Liberation Sans', sans-serif;color:#BBBBBB;white-space:pre">Ant</div>
<div style="position:absolute;left:638.1px;top:171px;transform-origin:0 0;transform:rotate(90deg);font:normal 7.2px/8.64px 'Liberation Sans', sans-serif;color:#BBBBBB;white-space:pre">Json Parser</div>
<div style="position:absolute;left:638.1px;top:217.2px;transform-origin:0 0;transform:rotate(90deg);font:normal 7.2px/8.64px 'Liberation Sans', sans-serif;color:#BBBBBB;white-space:pre">Json Helper</div>
<div style="position:absolute;left:0px;top:429px;width:640px;height:12px;background:#3C3F41;"></div>
<div style="position:absolute;left:177px;top:429px;width:452px;height:1px;background:#45484A;"></div>
<svg style="left:16px;top:431px" width="6" height="9"><path d="M1.2 0.5V8.5M4.6 0.8V3.2Q4.6 5 1.2 5.8" stroke="#AFB1B3" stroke-width="1.1" fill="none"/><circle cx="4.6" cy="1.2" r="1" fill="#AFB1B3"/></svg>
<div style="position:absolute;left:24.4px;top:431.69px;font:normal 7.3px/8.76px 'Liberation Sans', sans-serif;color:#BBBBBB;white-space:pre;letter-spacing:0px;"><u style="text-decoration-thickness:0.7px;text-underline-offset:1px">9</u>: Git</div>
<svg style="left:53.5px;top:431.5px" width="6" height="7"><path d="M0 1H1.2M2 1H6M0 3.3H1.2M2 3.3H6M0 5.6H1.2M2 5.6H6" stroke="#AFB1B3" stroke-width="1"/></svg>
<div style="position:absolute;left:60px;top:431.69px;font:normal 7.3px/8.76px 'Liberation Sans', sans-serif;color:#BBBBBB;white-space:pre;letter-spacing:0px;"><u style="text-decoration-thickness:0.7px;text-underline-offset:1px">6</u>: TODO</div>
<svg style="left:100.3px;top:430.5px" width="9" height="9"><circle cx="4.5" cy="4.5" r="4.2" fill="#4A2A2E"/><path d="M1.5 5.5Q3 1.5 5 3.5Q6.5 2 8 4.5L5.5 7.5Z" fill="#B8434A"/><circle cx="2.5" cy="6.5" r="1.3" fill="#3F8F55"/></svg>
<div style="position:absolute;left:111.3px;top:431.69px;font:normal 7.3px/8.76px 'Liberation Sans', sans-serif;color:#BBBBBB;white-space:pre;letter-spacing:0px;">MyBatis Log</div>
<svg style="left:162.2px;top:431.5px" width="7" height="7"><rect x="0" y="0" width="6.8" height="6.5" fill="#B8BABC"/><path d="M1.3 1.8L2.4 2.8L1.3 3.8M2.6 5H4.6" stroke="#3C3F41" stroke-width="0.7" fill="none"/></svg>
<div style="position:absolute;left:170.8px;top:431.69px;font:normal 7.3px/8.76px 'Liberation Sans', sans-serif;color:#BBBBBB;white-space:pre;letter-spacing:0px;">Terminal</div>
<svg style="left:212px;top:431px" width="7" height="8"><rect x="0.5" y="0.5" width="6" height="7" fill="none" stroke="#AFB1B3" stroke-width="1"/><rect x="3" y="3" width="3.5" height="4.5" fill="#AFB1B3"/></svg>
<div style="position:absolute;left:220.6px;top:431.69px;font:normal 7.3px/8.76px 'Liberation Sans', sans-serif;color:#BBBBBB;white-space:pre;letter-spacing:0px;">Java Enterprise</div>
<svg style="left:280px;top:431px" width="8" height="8"><path d="M0.5 7.5Q1 1 7.5 0.5Q7 7 0.5 7.5Z" fill="#AFB1B3"/></svg>
<div style="position:absolute;left:289.3px;top:431.69px;font:normal 7.3px/8.76px 'Liberation Sans', sans-serif;color:#BBBBBB;white-space:pre;letter-spacing:0px;">Spring</div>
<svg style="left:582.8px;top:431.3px" width="8" height="8"><circle cx="4" cy="4" r="3.9" fill="#E8A33E"/><text x="4" y="6.4" font-size="6" text-anchor="middle" fill="#3C3F41" font-family="Liberation Sans" font-weight="bold">2</text></svg>
<div style="position:absolute;left:592px;top:431.69px;font:normal 7.3px/8.76px 'Liberation Sans', sans-serif;color:#BBBBBB;white-space:pre;letter-spacing:0px;">Event Log</div>
<div style="position:absolute;left:0px;top:441px;width:640px;height:11px;background:#3C3F41;"></div>
<div style="position:absolute;left:2.3px;top:444.2px;width:6.3px;height:6.3px;background:transparent;border:0.9px solid #A8AAAC;box-sizing:border-box;border-radius:1px"></div>
<div style="position:absolute;left:13.1px;top:443.61px;font:normal 7.6px/9.12px 'Liberation Sans', sans-serif;color:#BBBBBB;white-space:pre;letter-spacing:0.07px;">Statement with id="selectByName" not defined in mapper XML</div>
<div style="position:absolute;left:461.4px;top:443.80px;font:normal 7.4px/8.88px 'Liberation Sans', sans-serif;color:#BBBBBB;white-space:pre;letter-spacing:0px;">21:25</div>
<div style="position:absolute;left:486.7px;top:443.80px;font:normal 7.4px/8.88px 'Liberation Sans', sans-serif;color:#BBBBBB;white-space:pre;letter-spacing:0px;">CRLF</div>
<div style="position:absolute;left:510.6px;top:443.80px;font:normal 7.4px/8.88px 'Liberation Sans', sans-serif;color:#BBBBBB;white-space:pre;letter-spacing:0px;">UTF-8</div>
<svg style="left:537.2px;top:443.5px" width="7" height="7"><path d="M1.5 3V1.8A1.5 1.5 0 0 1 4.5 1.8" stroke="#AFB1B3" stroke-width="0.9" fill="none"/><rect x="2" y="3" width="4.8" height="3.8" fill="#AFB1B3"/></svg>
<svg style="left:552px;top:443.5px" width="7" height="7"><path d="M0.5 2L3.5 0.3L6.5 2Z M1 2.5H6V5.5H1Z M0.3 6H6.7V7H0.3Z" fill="#AFB1B3"/></svg>
<svg style="left:566px;top:443px" width="6" height="8"><path d="M1.2 0.5V7.5M4.6 1V2.6Q4.6 4.6 1.2 5.2" stroke="#AFB1B3" stroke-width="1" fill="none"/><circle cx="4.6" cy="1.2" r="0.9" fill="#AFB1B3"/></svg>
<div style="position:absolute;left:575.2px;top:443.80px;font:normal 7.4px/8.88px 'Liberation Sans', sans-serif;color:#BBBBBB;white-space:pre;letter-spacing:0px;">master</div>
<div style="position:absolute;left:605.5px;top:443.80px;font:normal 7.4px/8.88px 'Liberation Sans', sans-serif;color:#BBBBBB;white-space:pre;letter-spacing:0px;">4 spaces</div>
</body></html>
